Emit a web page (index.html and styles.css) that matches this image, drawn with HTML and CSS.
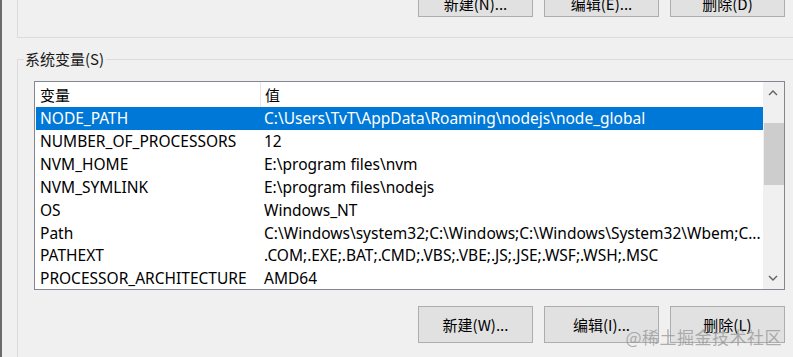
FILE: index.html
```html
<!DOCTYPE html>
<html>
    <head>
        <meta charset="utf-8">
        <title>环境变量</title>
        <link rel="stylesheet" href="styles.css">
    </head>
    <body>
        <div class="window">

            <div class="user-group">
                <div class="btn-row btn-row-top">
                    <button class="btn">新建(N)...</button>
                    <button class="btn">编辑(E)...</button>
                    <button class="btn">删除(D)</button>
                </div>
            </div>

            <fieldset class="sys-group">
                <legend>系统变量(S)</legend>

                <div class="listbox">
                    <div class="list-body">
                        <div class="list-head">
                            <div class="col-name">变量</div>
                            <div class="col-value">值</div>
                        </div>
                        <div class="row selected"><div class="col-name">NODE_PATH</div><div class="col-value">C:\Users\TvT\AppData\Roaming\nodejs\node_global</div></div>
                        <div class="row"><div class="col-name">NUMBER_OF_PROCESSORS</div><div class="col-value">12</div></div>
                        <div class="row"><div class="col-name">NVM_HOME</div><div class="col-value">E:\program files\nvm</div></div>
                        <div class="row"><div class="col-name">NVM_SYMLINK</div><div class="col-value">E:\program files\nodejs</div></div>
                        <div class="row"><div class="col-name">OS</div><div class="col-value">Windows_NT</div></div>
                        <div class="row"><div class="col-name">Path</div><div class="col-value">C:\Windows\system32;C:\Windows;C:\Windows\System32\Wbem;C...</div></div>
                        <div class="row"><div class="col-name">PATHEXT</div><div class="col-value">.COM;.EXE;.BAT;.CMD;.VBS;.VBE;.JS;.JSE;.WSF;.WSH;.MSC</div></div>
                        <div class="row"><div class="col-name">PROCESSOR_ARCHITECTURE</div><div class="col-value">AMD64</div></div>
                    </div>
                    <div class="scrollbar">
                        <svg class="arrow" width="20" height="22" viewBox="0 0 20 22"><path d="M6 13 L10 9 L14 13" fill="none" stroke="#606060" stroke-width="1.4"/></svg>
                        <div class="track"><div class="thumb"></div></div>
                        <svg class="arrow" width="20" height="22" viewBox="0 0 20 22"><path d="M6 9 L10 13 L14 9" fill="none" stroke="#606060" stroke-width="1.4"/></svg>
                    </div>
                </div>

                <div class="btn-row btn-row-bottom">
                    <button class="btn">新建(W)...</button>
                    <button class="btn">编辑(I)...</button>
                    <button class="btn">删除(L)</button>
                    <span class="watermark">@稀土掘金技术社区</span>
                </div>
            </fieldset>

        </div>
    </body>
</html>
```

FILE: styles.css
```css
* {
    margin: 0;
    padding: 0;
    box-sizing: border-box;
}

body {
    width: 793px;
    height: 357px;
    overflow: hidden;
    background: #f0f0f0;
    font-family: "Noto Sans", "Noto Sans CJK SC", sans-serif;
    font-size: 15.5px;
    color: #000000;
}

.window {
    height: 357px;
    border-left: 2px solid #6b6b6b;
    padding-left: 15px;
    position: relative;
}

/* upper group box, only its bottom is visible */
.user-group {
    display: flow-root;
    height: 38px;
    border-left: 1px solid #dcdcdc;
    border-bottom: 1px solid #dcdcdc;
    margin-right: -10px;
}

.btn-row {
    display: flex;
    justify-content: flex-end;
    gap: 11px;
}
.btn-row-top {
    margin-top: -20px;
    padding-right: 18px;
}
.btn-row-top .btn {
    padding-top: 10px;
}

.btn {
    width: 115px;
    height: 37px;
    background: #e1e1e1;
    border: 1px solid #adadad;
    font-family: "Noto Sans CJK SC", sans-serif;
    font-size: 15px;
    color: #000000;
}

/* system variables group */
.sys-group {
    margin-top: 10px;
    margin-right: -10px;
    border: 1px solid #dcdcdc;
    border-right: none;
    border-bottom: none;
    padding: 0 18px 0 16px;
    height: 320px;
    position: relative;
}
.sys-group legend {
    margin-left: -10px;
    padding: 0 2px 0 1px;
    font-family: "Noto Sans CJK SC", sans-serif;
    font-size: 15px;
    line-height: 22px;
    color: #1a1a1a;
}

.listbox {
    margin-top: 11px;
    width: 751px;
    height: 209px;
    border: 1px solid #828790;
    background: #ffffff;
    display: flex;
    overflow: hidden;
}

.list-body {
    flex: 1;
    padding-left: 1px;
}

.list-head {
    display: flex;
    height: 25px;
    align-items: center;
    font-family: "Noto Sans CJK SC", sans-serif;
    font-size: 15px;
}
.list-head .col-value {
    border-left: 1px solid #e5e5e5;
    height: 25px;
    line-height: 25px;
    padding-left: 4px;
}

.row {
    display: flex;
    height: 22.85px;
    line-height: 22px;
    align-items: center;
    white-space: nowrap;
}
.row.selected {
    background: #0078d7;
    color: #ffffff;
}

.col-name {
    width: 224px;
    padding-left: 4px;
}
.col-value {
    flex: 1;
    padding-left: 4px;
}

.scrollbar {
    width: 21px;
    background: #f0f0f0;
    display: flex;
    flex-direction: column;
}
.arrow {
    display: block;
    height: 22px;
}
.track {
    flex: 1;
    padding-top: 19px;
}
.thumb {
    margin-left: 1px;
    height: 62px;
    background: #cdcdcd;
}

.btn-row-bottom {
    margin-top: 16px;
    position: relative;
}

.watermark {
    position: absolute;
    right: 3px;
    top: 18px;
    font-family: "Noto Sans CJK SC", sans-serif;
    font-size: 17px;
    color: rgba(150, 150, 150, 0.75);
    letter-spacing: 0.5px;
}
```
